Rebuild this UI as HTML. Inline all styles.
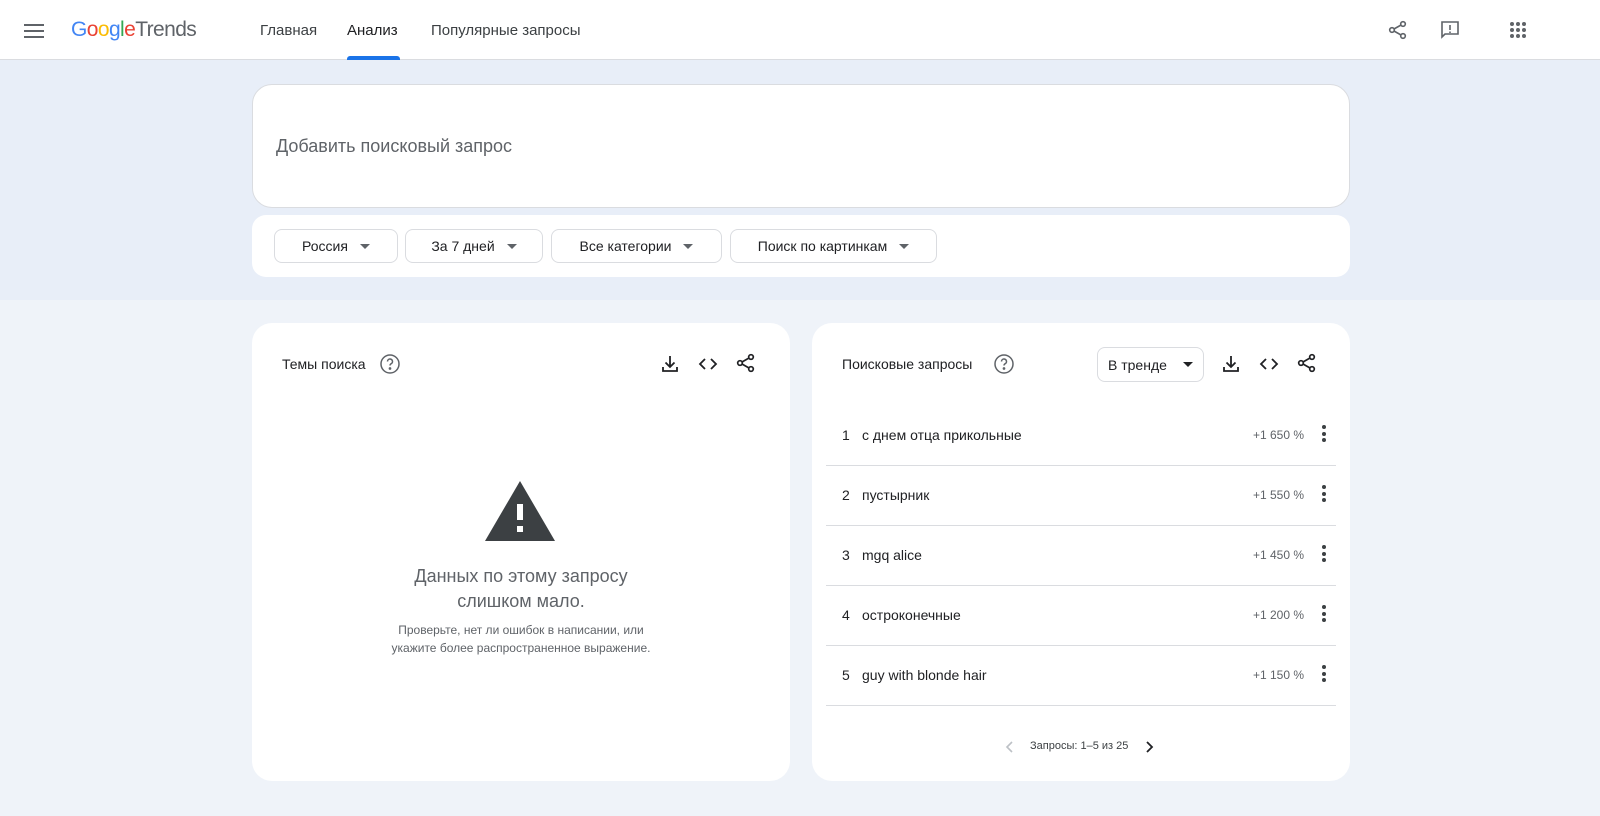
<!DOCTYPE html>
<html><head><meta charset="utf-8"><style>
*{box-sizing:border-box;margin:0;padding:0}
body{width:1600px;height:816px;overflow:hidden;font-family:"Liberation Sans",Arial,sans-serif;background:#eff3f9;color:#202124;position:relative}
.hdr{position:absolute;left:0;top:0;width:1600px;height:60px;background:#fff;border-bottom:1px solid #dadce0}
.band{position:absolute;left:0;top:60px;width:1600px;height:240px;background:#e8eef8}
.abs{position:absolute}
.card{position:absolute;background:#fff;border-radius:20px}
.nav{position:absolute;top:22px;font-size:15px;color:#3c4043}
.chip{position:absolute;top:229px;height:34px;border:1px solid #dadce0;border-radius:8px;font-size:14px;display:flex;align-items:center;justify-content:center;gap:12px}
.tri{width:0;height:0;border-left:5px solid transparent;border-right:5px solid transparent;border-top:5px solid #5f6368}
.row{position:absolute;left:826px;width:510px;height:60px;border-bottom:1px solid #dadce0;font-size:14px}
.row .n{position:absolute;left:16px;top:21px}
.row .t{position:absolute;left:36px;top:21px}
.row .p{position:absolute;right:32px;top:22px;font-size:12px;color:#5f6368}
.dots{position:absolute;right:10px;top:19px;width:4px}
.dots i{display:block;width:4px;height:4px;border-radius:2px;background:#3c4043;margin-bottom:2.5px}
svg{position:absolute}
</style></head><body>
<div class="hdr"></div>
<div class="band"></div>
<svg style="left:24px;top:24px" width="20" height="14"><path d="M0 1h20M0 7h20M0 13h20" stroke="#5f6368" stroke-width="2"/></svg>
<div class="abs" style="left:71px;top:18px;font-size:21px;letter-spacing:-0.6px"><span style="color:#4285f4">G</span><span style="color:#ea4335">o</span><span style="color:#fbbc04">o</span><span style="color:#4285f4">g</span><span style="color:#34a853">l</span><span style="color:#ea4335">e</span><span style="color:#5f6368">Trends</span></div>
<div class="nav" style="left:260px">Главная</div>
<div class="nav" style="left:347px;color:#202124">Анализ</div>
<div class="abs" style="left:347px;top:56px;width:53px;height:4px;background:#1a73e8;border-radius:3px 3px 0 0"></div>
<div class="nav" style="left:431px">Популярные запросы</div>
<svg style="left:1388px;top:20px" width="20" height="20" viewBox="0 0 20 20" fill="none" stroke="#5f6368" stroke-width="1.6"><circle cx="15" cy="4" r="2.3"/><circle cx="4" cy="10" r="2.3"/><circle cx="15" cy="16" r="2.3"/><path d="M6 9L13 5M6 11L13 15"/></svg>
<svg style="left:1440px;top:20px" width="20" height="20" viewBox="0 0 20 20" fill="none" stroke="#5f6368" stroke-width="1.6"><path d="M2 2h16v12H5l-3 3z"/><path d="M10 5v5M10 11.5v1.5"/></svg>
<svg style="left:1510px;top:22px" width="16" height="16" fill="#5f6368"><circle cx="2" cy="2" r="2"/><circle cx="8" cy="2" r="2"/><circle cx="14" cy="2" r="2"/><circle cx="2" cy="8" r="2"/><circle cx="8" cy="8" r="2"/><circle cx="14" cy="8" r="2"/><circle cx="2" cy="14" r="2"/><circle cx="8" cy="14" r="2"/><circle cx="14" cy="14" r="2"/></svg>

<div class="card" style="left:252px;top:84px;width:1098px;height:124px;border:1px solid #dadce0"></div>
<div class="abs" style="left:276px;top:136px;font-size:18px;color:#5f6368">Добавить поисковый запрос</div>
<div class="card" style="left:252px;top:215px;width:1098px;height:62px;border-radius:14px"></div>
<div class="chip" style="left:274px;width:124px">Россия<span class="tri"></span></div>
<div class="chip" style="left:405px;width:138px">За 7 дней<span class="tri"></span></div>
<div class="chip" style="left:551px;width:171px">Все категории<span class="tri"></span></div>
<div class="chip" style="left:730px;width:207px">Поиск по картинкам<span class="tri"></span></div>

<div class="card" style="left:252px;top:323px;width:538px;height:458px"></div>
<div class="abs" style="left:282px;top:356px;font-size:14px">Темы поиска</div>
<svg style="left:380px;top:354px" width="20" height="20" viewBox="0 0 20 20" fill="none" stroke="#5f6368" stroke-width="1.5"><circle cx="10" cy="10" r="9"/><path d="M7.5 7.5a2.5 2.5 0 1 1 3.5 2.3c-.7.4-1 .9-1 1.7"/><circle cx="10" cy="14.5" r=".6" fill="#5f6368"/></svg>
<svg style="left:660px;top:354px" width="20" height="20" viewBox="0 0 20 20" fill="none" stroke="#202124" stroke-width="1.8"><path d="M10 2v11M5.5 8.5L10 13l4.5-4.5M3 13v4h14v-4"/></svg>
<svg style="left:698px;top:356px" width="20" height="16" viewBox="0 0 20 16" fill="none" stroke="#202124" stroke-width="1.8"><path d="M7 3L2 8l5 5M13 3l5 5-5 5"/></svg>
<svg style="left:736px;top:353px" width="20" height="20" viewBox="0 0 20 20" fill="none" stroke="#202124" stroke-width="1.7"><circle cx="15" cy="4" r="2.3"/><circle cx="4" cy="10" r="2.3"/><circle cx="15" cy="16" r="2.3"/><path d="M6 9L13 5M6 11L13 15"/></svg>
<svg style="left:485px;top:481px" width="70" height="60" viewBox="0 0 70 60"><path d="M35 0L70 60H0z" fill="#3c4043"/><rect x="32" y="23" width="6" height="16" fill="#fff"/><rect x="32" y="45" width="6" height="6" fill="#fff"/></svg>
<div class="abs" style="left:252px;top:564px;width:538px;text-align:center;font-size:18px;line-height:25px;color:#5f6368">Данных по этому запросу<br>слишком мало.</div>
<div class="abs" style="left:252px;top:621px;width:538px;text-align:center;font-size:12px;line-height:18px;color:#5f6368">Проверьте, нет ли ошибок в написании, или<br>укажите более распространенное выражение.</div>

<div class="card" style="left:812px;top:323px;width:538px;height:458px"></div>
<div class="abs" style="left:842px;top:356px;font-size:14px">Поисковые запросы</div>
<svg style="left:994px;top:354px" width="20" height="20" viewBox="0 0 20 20" fill="none" stroke="#5f6368" stroke-width="1.5"><circle cx="10" cy="10" r="9"/><path d="M7.5 7.5a2.5 2.5 0 1 1 3.5 2.3c-.7.4-1 .9-1 1.7"/><circle cx="10" cy="14.5" r=".6" fill="#5f6368"/></svg>
<div class="abs" style="left:1097px;top:347px;width:107px;height:35px;border:1px solid #dadce0;border-radius:8px;font-size:14px;display:flex;align-items:center;gap:16px;padding-left:10px">В тренде<span class="tri" style="border-top-color:#202124"></span></div>
<svg style="left:1221px;top:354px" width="20" height="20" viewBox="0 0 20 20" fill="none" stroke="#202124" stroke-width="1.8"><path d="M10 2v11M5.5 8.5L10 13l4.5-4.5M3 13v4h14v-4"/></svg>
<svg style="left:1259px;top:356px" width="20" height="16" viewBox="0 0 20 16" fill="none" stroke="#202124" stroke-width="1.8"><path d="M7 3L2 8l5 5M13 3l5 5-5 5"/></svg>
<svg style="left:1297px;top:353px" width="20" height="20" viewBox="0 0 20 20" fill="none" stroke="#202124" stroke-width="1.7"><circle cx="15" cy="4" r="2.3"/><circle cx="4" cy="10" r="2.3"/><circle cx="15" cy="16" r="2.3"/><path d="M6 9L13 5M6 11L13 15"/></svg>

<div class="row" style="top:406px"><span class="n">1</span><span class="t">с днем отца прикольные</span><span class="p">+1 650 %</span><div class="dots"><i></i><i></i><i></i></div></div>
<div class="row" style="top:466px"><span class="n">2</span><span class="t">пустырник</span><span class="p">+1 550 %</span><div class="dots"><i></i><i></i><i></i></div></div>
<div class="row" style="top:526px"><span class="n">3</span><span class="t">mgq alice</span><span class="p">+1 450 %</span><div class="dots"><i></i><i></i><i></i></div></div>
<div class="row" style="top:586px"><span class="n">4</span><span class="t">остроконечные</span><span class="p">+1 200 %</span><div class="dots"><i></i><i></i><i></i></div></div>
<div class="row" style="top:646px"><span class="n">5</span><span class="t">guy with blonde hair</span><span class="p">+1 150 %</span><div class="dots"><i></i><i></i><i></i></div></div>

<svg style="left:1005px;top:740px" width="10" height="14"><path d="M7 2L2 7l5 5" stroke="#bdc1c6" stroke-width="1.6" fill="none"/></svg>
<div class="abs" style="left:1030px;top:740px;font-size:11px;color:#3c4043">Запросы: 1–5 из 25</div>
<svg style="left:1144px;top:740px" width="10" height="14"><path d="M3 2l5 5-5 5" stroke="#202124" stroke-width="1.8" fill="none"/></svg>
</body></html>
